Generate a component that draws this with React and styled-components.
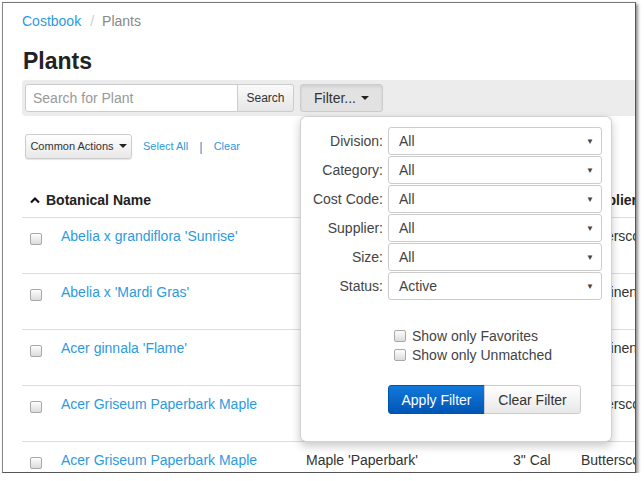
import React from "react";
import styled, { createGlobalStyle } from "styled-components";

const GlobalStyle = createGlobalStyle`
  html, body {
    margin: 0;
    padding: 0;
    background: #fff;
  }
  body {
    font-family: "Liberation Sans", Arial, sans-serif;
    font-size: 14px;
    color: #333;
  }
`;

const LINK = "#2d9ae0";

const plants = [
  { name: "Abelia x grandiflora 'Sunrise'", common: "Abelia 'Sunrise'", size: "#3", supplier: "Butterscotch Farms" },
  { name: "Abelia x 'Mardi Gras'", common: "Abelia 'Mardi Gras'", size: "#3", supplier: "Continental Nursery" },
  { name: "Acer ginnala 'Flame'", common: "Amur Maple", size: "2\" Cal", supplier: "Continental Nursery" },
  { name: "Acer Griseum Paperbark Maple", common: "Maple 'Paperbark'", size: "2\" Cal", supplier: "Butterscotch Farms" },
  { name: "Acer Griseum Paperbark Maple", common: "Maple 'Paperbark'", size: "3\" Cal", supplier: "Butterscotch Farms" },
];

const filters = [
  { label: "Division:", value: "All" },
  { label: "Category:", value: "All" },
  { label: "Cost Code:", value: "All" },
  { label: "Supplier:", value: "All" },
  { label: "Size:", value: "All" },
  { label: "Status:", value: "Active" },
];

export default function App() {
  return (
    <>
      <GlobalStyle />
      <Frame>
        <Page>
          <Breadcrumb>
            <BreadLink>Costbook</BreadLink>
            <Divider>/</Divider>
            <span>Plants</span>
          </Breadcrumb>
          <Title>Plants</Title>
          <Toolbar>
            <SearchInput placeholder="Search for Plant" />
            <SearchButton>Search</SearchButton>
            <FilterButton>
              Filter... <Caret />
            </FilterButton>
          </Toolbar>
          <Actions>
            <SmallButton>
              Common Actions <Caret />
            </SmallButton>
            <SmallLink>Select All</SmallLink>
            <Pipe>|</Pipe>
            <SmallLink>Clear</SmallLink>
          </Actions>
          <Table>
            <thead>
              <tr>
                <HeadCell $w={39} />
                <HeadCell $w={245}>
                  <SortIcon viewBox="0 0 10 8">
                    <path d="M1 6.5 L5 2.5 L9 6.5" fill="none" stroke="#111" strokeWidth="2.2" />
                  </SortIcon>
                  Botanical Name
                </HeadCell>
                <HeadCell $w={207}>Common Name</HeadCell>
                <HeadCell $w={68}>Size</HeadCell>
                <HeadCell $w={140}>Supplier</HeadCell>
              </tr>
            </thead>
            <tbody>
              {plants.map((p, i) => (
                <tr key={i}>
                  <Cell>
                    <Check />
                  </Cell>
                  <Cell>
                    <NameLink>{p.name}</NameLink>
                  </Cell>
                  <Cell>{p.common}</Cell>
                  <Cell>{p.size}</Cell>
                  <Cell>{p.supplier}</Cell>
                </tr>
              ))}
            </tbody>
          </Table>
        </Page>
        <FilterPanel>
          <FilterGrid>
            {filters.map((f) => (
              <React.Fragment key={f.label}>
                <FilterLabel>{f.label}</FilterLabel>
                <SelectBox>
                  <span>{f.value}</span>
                  <SelectArrow>▼</SelectArrow>
                </SelectBox>
              </React.Fragment>
            ))}
          </FilterGrid>
          <Options>
            <OptionRow>
              <Check />
              Show only Favorites
            </OptionRow>
            <OptionRow>
              <Check />
              Show only Unmatched
            </OptionRow>
          </Options>
          <ButtonGroup>
            <PrimaryButton>Apply Filter</PrimaryButton>
            <DefaultButton>Clear Filter</DefaultButton>
          </ButtonGroup>
        </FilterPanel>
      </Frame>
    </>
  );
}

const Frame = styled.div`
  position: relative;
  margin: 2px 0 0 2px;
  width: 632px;
  height: 469px;
  border: 1px solid #555;
  border-left-color: #888;
  border-top-color: #777;
  box-shadow: 2px 2px 3px rgba(0, 0, 0, 0.45);
  overflow: hidden;
  background: #fff;
`;

const Page = styled.div`
  padding: 8px 0 0 19px;
  width: 900px;
`;

const Breadcrumb = styled.div`
  display: flex;
  align-items: center;
  height: 20px;
  color: #888;
  font-size: 14px;
`;

const BreadLink = styled.a`
  color: ${LINK};
`;

const Divider = styled.span`
  color: #ccc;
  padding: 0 8px 0 9px;
`;

const Title = styled.h1`
  margin: 17px 0 0 1px;
  font-size: 23px;
  line-height: 26px;
  font-weight: bold;
  color: #222;
`;

const Toolbar = styled.div`
  display: flex;
  align-items: center;
  margin-top: 6px;
  height: 36px;
  padding: 0 3px;
  background: #ececec;
  border-radius: 4px 0 0 4px;
`;

const SearchInput = styled.input`
  box-sizing: border-box;
  width: 213px;
  height: 28px;
  padding: 0 7px;
  border: 1px solid #ccc;
  border-radius: 3px 0 0 3px;
  font-family: inherit;
  font-size: 14px;
  outline: none;
  &::placeholder {
    color: #999;
  }
`;

const SearchButton = styled.button`
  box-sizing: border-box;
  width: 57px;
  height: 28px;
  margin-left: -1px;
  border: 1px solid #ccc;
  border-radius: 0 3px 3px 0;
  background: linear-gradient(#fafafa, #e6e6e6);
  font-family: inherit;
  font-size: 12px;
  color: #333;
`;

const FilterButton = styled.button`
  box-sizing: border-box;
  width: 83px;
  height: 28px;
  margin-left: 6px;
  border: 1px solid #ccc;
  border-radius: 3px;
  background: #e2e2e2;
  box-shadow: inset 0 2px 3px rgba(0, 0, 0, 0.08);
  font-family: inherit;
  font-size: 14px;
  color: #333;
  display: flex;
  align-items: center;
  justify-content: center;
  gap: 5px;
`;

const Caret = styled.span`
  display: inline-block;
  width: 0;
  height: 0;
  border-left: 4px solid transparent;
  border-right: 4px solid transparent;
  border-top: 4px solid #222;
`;

const Actions = styled.div`
  display: flex;
  align-items: center;
  margin-top: 18px;
  margin-left: 3px;
  height: 24px;
`;

const SmallButton = styled.button`
  box-sizing: border-box;
  height: 25px;
  width: 107px;
  padding: 0;
  border: 1px solid #ccc;
  border-radius: 3px;
  background: linear-gradient(#fff, #e8e8e8);
  box-shadow: 0 1px 1px rgba(0, 0, 0, 0.1);
  font-family: inherit;
  font-size: 11px;
  color: #333;
  white-space: nowrap;
  display: flex;
  align-items: center;
  justify-content: center;
  gap: 5px;
`;

const SmallLink = styled.a`
  color: ${LINK};
  font-size: 11px;
  margin-left: 11px;
`;

const Pipe = styled.span`
  color: ${LINK};
  font-size: 13px;
  margin-left: 11px;
`;

const Table = styled.table`
  margin-top: 22px;
  border-collapse: collapse;
  table-layout: fixed;
  width: 699px;
`;

const HeadCell = styled.th`
  box-sizing: border-box;
  width: ${(p) => p.$w}px;
  text-align: left;
  font-size: 14px;
  font-weight: bold;
  color: #222;
  height: 37px;
  padding: 3px 0 0 0;
  border-bottom: 1px solid #ddd;
  white-space: nowrap;
`;

const SortIcon = styled.svg`
  width: 10px;
  height: 8px;
  margin: 0 6px 0 -31px;
  vertical-align: 1px;
`;

const Cell = styled.td`
  box-sizing: border-box;
  height: 56px;
  vertical-align: top;
  padding: 10px 0 0 0;
  border-bottom: 1px solid #ddd;
  font-size: 14px;
  color: #333;
  white-space: nowrap;
  overflow: hidden;
  &:first-child {
    padding: 14px 0 0 8px;
  }
`;

const NameLink = styled.a`
  color: ${LINK};
`;

const Check = styled.span`
  display: inline-block;
  box-sizing: border-box;
  width: 12px;
  height: 12px;
  border: 1px solid #a8a8a8;
  border-radius: 2px;
  background: linear-gradient(#fdfdfd, #dcdcdc);
`;

const FilterPanel = styled.div`
  position: absolute;
  left: 297px;
  top: 113px;
  width: 312px;
  height: 326px;
  box-sizing: border-box;
  padding: 10px 10px 0 0;
  background: #fff;
  border: 1px solid rgba(0, 0, 0, 0.18);
  border-radius: 6px;
  box-shadow: 0 4px 10px rgba(0, 0, 0, 0.22);
`;

const FilterGrid = styled.div`
  display: grid;
  grid-template-columns: 82px 214px;
  column-gap: 5px;
  row-gap: 1px;
  align-items: center;
`;

const FilterLabel = styled.div`
  text-align: right;
  font-size: 14px;
  color: #444;
`;

const SelectBox = styled.div`
  box-sizing: border-box;
  height: 28px;
  display: flex;
  align-items: center;
  justify-content: space-between;
  padding: 0 7px 0 10px;
  border: 1px solid #ccc;
  border-radius: 3px;
  font-size: 14px;
  color: #444;
`;

const SelectArrow = styled.span`
  font-size: 8px;
  color: #444;
`;

const Options = styled.div`
  margin: 26px 0 0 93px;
  display: flex;
  flex-direction: column;
`;

const OptionRow = styled.label`
  display: flex;
  align-items: center;
  gap: 6px;
  height: 19px;
  font-size: 14px;
  color: #444;
`;

const ButtonGroup = styled.div`
  display: flex;
  margin: 21px 0 0 87px;
`;

const PrimaryButton = styled.button`
  box-sizing: border-box;
  width: 97px;
  height: 29px;
  border: 1px solid #0053a6;
  border-radius: 3px 0 0 3px;
  background: linear-gradient(#1179dc, #0056b5);
  color: #fff;
  font-family: inherit;
  font-size: 14px;
`;

const DefaultButton = styled.button`
  box-sizing: border-box;
  width: 97px;
  height: 29px;
  margin-left: -1px;
  border: 1px solid #ccc;
  border-radius: 0 3px 3px 0;
  background: linear-gradient(#fff, #e8e8e8);
  color: #333;
  font-family: inherit;
  font-size: 14px;
`;
